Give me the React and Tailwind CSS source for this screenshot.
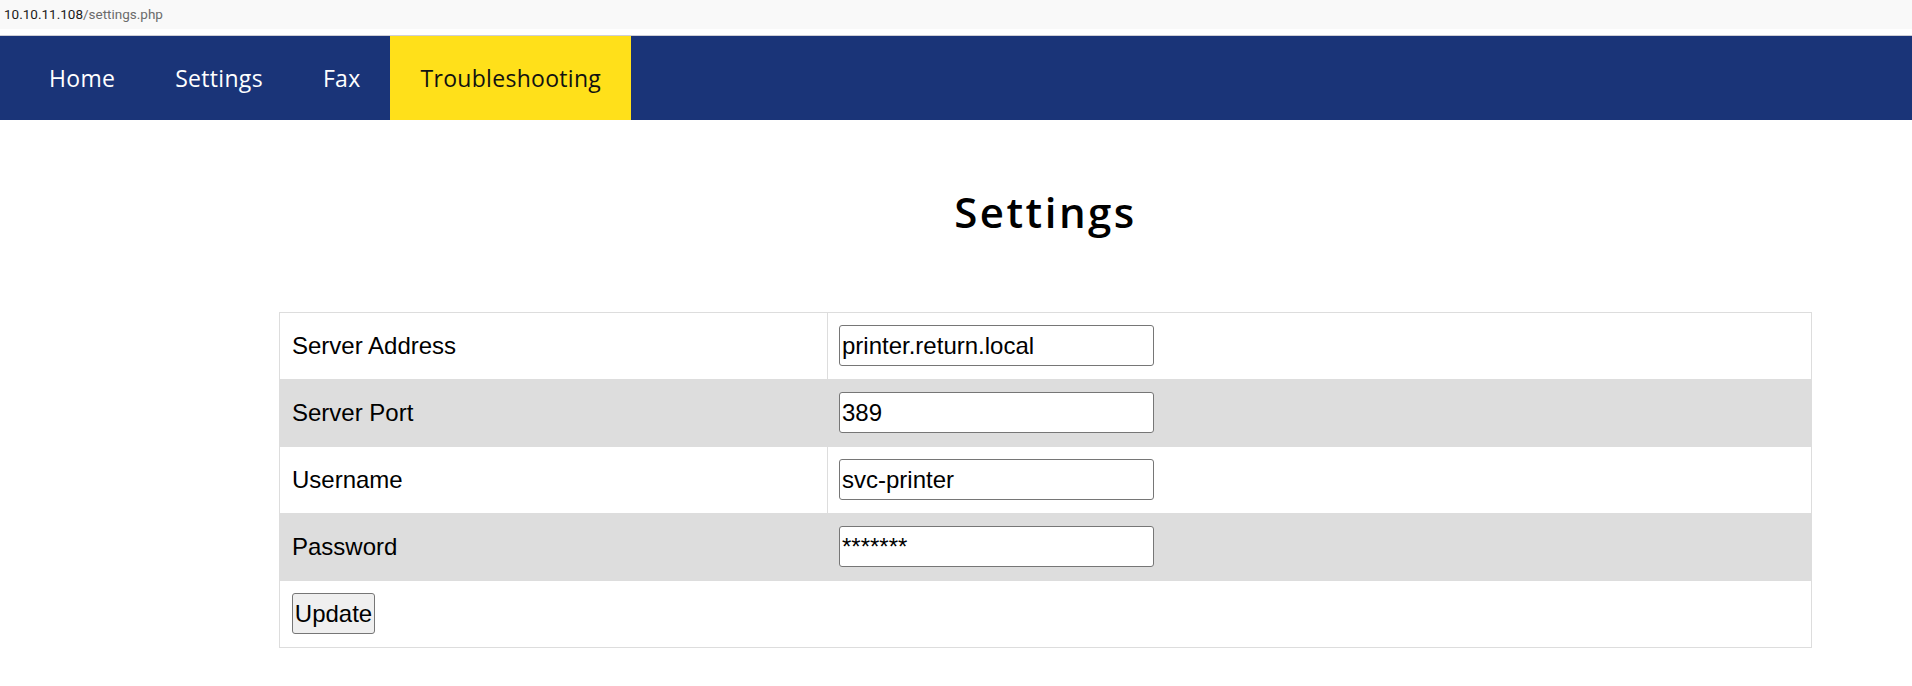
import React from "react";

const rows = [
  { label: "Server Address", value: "printer.return.local", gray: false },
  { label: "Server Port", value: "389", gray: true },
  { label: "Username", value: "svc-printer", gray: false },
  { label: "Password", value: "*******", gray: true },
];

export default function App() {
  return (
    <div className="w-full min-h-[686px] bg-white">
      <div className="h-[36px] border-b border-[#cfcfd6] bg-white">
        <div className="h-[29px] bg-[#f9f9f9] flex items-center pl-[4px] text-[13.5px] font-['Roboto',sans-serif]">
          <span className="text-[#1b1b1b]">10.10.11.108</span>
          <span className="text-[#6b6b6b]">/settings.php</span>
        </div>
      </div>
      <nav className="h-[84px] bg-[#1a3478] flex pl-[19px] font-['Open_Sans',sans-serif] text-[23px] tracking-[0.3px]">
        <a className="px-[30px] flex items-center text-white">Home</a>
        <a className="px-[30px] flex items-center text-white">Settings</a>
        <a className="px-[30px] flex items-center text-white">Fax</a>
        <a className="px-[30px] flex items-center bg-[#ffe01a] text-[#111]">Troubleshooting</a>
      </nav>
      <div className="ml-[279px] w-[1533px]">
        <h1 className="mt-[68px] mb-[76px] text-center text-[42px] leading-[48px] font-semibold tracking-[2.5px] text-black font-['Open_Sans',sans-serif]">
          Settings
        </h1>
        <table className="w-[1533px] table-fixed border-collapse border border-[#dddddd] font-['Liberation_Sans',Arial,sans-serif] text-[24px] text-black">
          <colgroup>
            <col className="w-[548px]" />
            <col />
          </colgroup>
          <tbody>
            {rows.map((r) => (
              <tr key={r.label} className={r.gray ? "bg-[#dddddd]" : "bg-white"}>
                <td className="border border-[#dddddd] px-[12px] pt-[12px] pb-[13px] align-middle">
                  {r.label}
                </td>
                <td className="border border-[#dddddd] px-[11px] pt-[12px] pb-[13px] align-middle">
                  <input
                    type="text"
                    defaultValue={r.value}
                    className="block w-[315px] h-[41px] px-[2px] bg-white border border-[#767676] rounded-[3px] text-[24px] text-black font-['Liberation_Sans',Arial,sans-serif] outline-none"
                  />
                </td>
              </tr>
            ))}
            <tr className="bg-white">
              <td colSpan={2} className="border border-[#dddddd] px-[12px] pt-[12px] pb-[13px]">
                <button className="block h-[41px] w-[83px] bg-[#efefef] border border-[#767676] rounded-[3px] text-[24px] text-black font-['Liberation_Sans',Arial,sans-serif]">
                  Update
                </button>
              </td>
            </tr>
          </tbody>
        </table>
      </div>
    </div>
  );
}
